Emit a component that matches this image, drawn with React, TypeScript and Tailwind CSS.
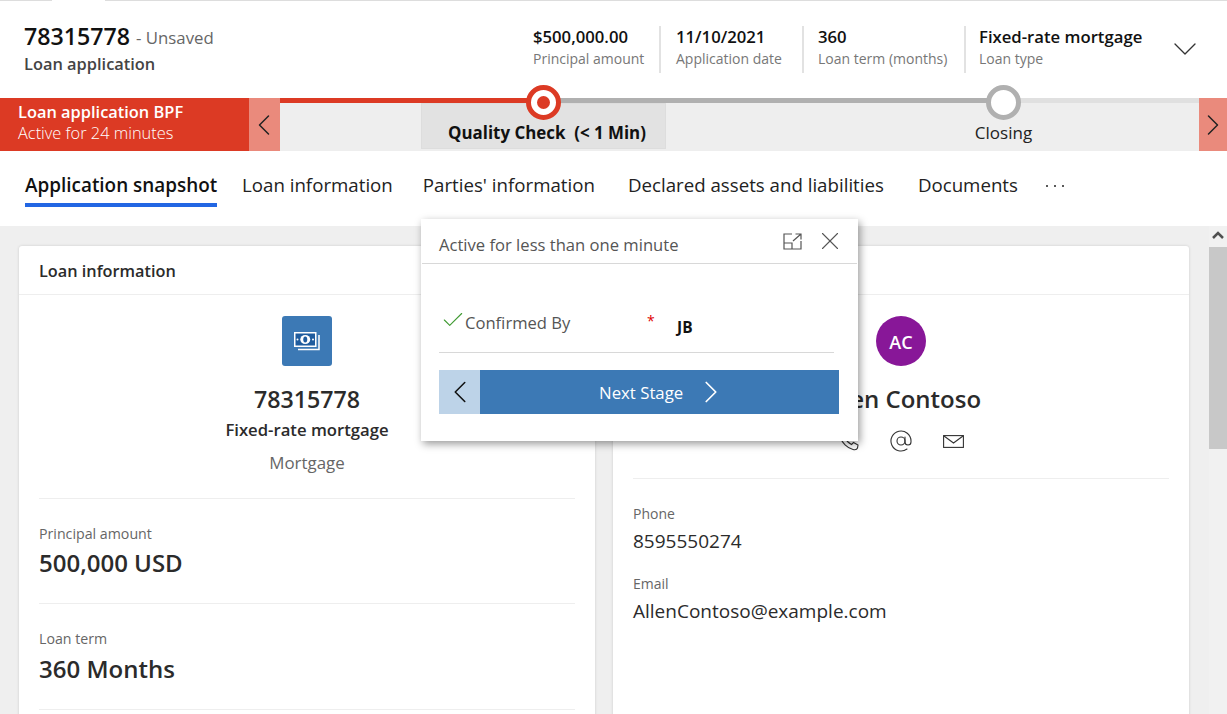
import { ChevronDown, ChevronLeft, ChevronRight, X, Check, AtSign } from 'lucide-react';

const fields = [
  { value: '$500,000.00', label: 'Principal amount', cls: 'w-[126px]' },
  { value: '11/10/2021', label: 'Application date', cls: 'w-[143px] border-l-2 border-[#e2e2e2] pl-[15px]' },
  { value: '360', label: 'Loan term (months)', cls: 'w-[162px] border-l-2 border-[#e2e2e2] pl-[14px]' },
  { value: 'Fixed-rate mortgage', label: 'Loan type', cls: 'w-[198px] border-l-2 border-[#e2e2e2] pl-[13px]' },
];

const tabs = [
  { name: 'Loan information', cls: 'ml-[25px]' },
  { name: "Parties' information", cls: 'ml-[30px]' },
  { name: 'Declared assets and liabilities', cls: 'ml-[33px]' },
  { name: 'Documents', cls: 'ml-[34px]' },
];

const MoneyIcon = () => (
  <svg width="26" height="19" viewBox="0 0 26 19" fill="none">
    <path d="M4 17.5H25V3" stroke="white" strokeWidth="1.5" />
    <rect x="0.75" y="0.75" width="21" height="13.5" fill="#1f5c9e" stroke="white" strokeWidth="1.5" />
    <ellipse cx="11.25" cy="7.5" rx="5" ry="4.5" fill="white" />
    <ellipse cx="11.25" cy="7.5" rx="2" ry="3" fill="#1f5c9e" />
    <circle cx="3.5" cy="7.5" r="1" fill="white" />
    <circle cx="19" cy="7.5" r="1" fill="white" />
  </svg>
);

const ExpandIcon = () => (
  <svg width="19" height="17" viewBox="0 0 19 17" fill="none" stroke="#555" strokeWidth="1.2">
    <path d="M9 1H1V16H18V8" />
    <path d="M1 10H9V16" />
    <path d="M10 8L18 1M12.5 1H18V6.5" />
  </svg>
);

const MailIcon = () => (
  <svg width="21" height="13" viewBox="0 0 21 13" fill="none" stroke="#333" strokeWidth="1.1">
    <rect x="0.6" y="0.6" width="19.8" height="11.8" />
    <path d="M1 1L10.5 8L20 1" />
  </svg>
);

const PhoneIcon = () => (
  <svg width="20" height="20" viewBox="0 0 20 20" fill="none" stroke="#333" strokeWidth="1.1">
    <path d="M3 1.5L6.5 1L8.5 5.5L6.5 7.5C7.5 10 9.5 12 12.5 13.5L14.5 11.5L19 14L18.5 17C18 18.5 16 19 14 18.5C8 17 3 12 1.5 6C1.2 4 1.5 2.5 3 1.5Z" />
  </svg>
);

const Stat = ({ label, value, cls }: { label: string; value: string; cls: string }) => (
  <div className="h-[105px] border-t border-[#eeeeee] pt-[25px]">
    <div className="text-[14.2px] leading-5 text-[#666666]">{label}</div>
    <div className={`${cls} text-[24px] leading-8 font-semibold text-[#2b2b2b]`}>{value}</div>
  </div>
);

const Contact = ({ label, value, cls }: { label: string; value: string; cls: string }) => (
  <div className={cls}>
    <div className="text-[14px] leading-5 text-[#666666]">{label}</div>
    <div className="mt-[5px] text-[19px] leading-6 text-[#2b2b2b]">{value}</div>
  </div>
);

const App = () => {
  return (
    <div className="relative h-[714px] w-[1227px] overflow-hidden bg-white font-['Open_Sans',sans-serif]">
      {/* top strip */}
      <div className="flex h-[1px]">
        <div className="w-[52px] bg-[#dddddd]"></div>
        <div className="w-[53px]"></div>
        <div className="flex-1 bg-[#dddddd]"></div>
      </div>

      {/* header */}
      <div className="flex h-[97px] items-start">
        <div className="w-[533px] pt-[19px] pl-[24px]">
          <div className="flex items-baseline">
            <span className="text-[23.2px] leading-8 font-semibold text-[#111111]">78315778</span>
            <span className="ml-[6px] -translate-y-px text-[16.8px] text-[#666666]">- Unsaved</span>
          </div>
          <div className="text-[16.4px] leading-6 font-semibold text-[#444444]">Loan application</div>
        </div>
        <div className="mt-[25px] flex">
          {fields.map((f) => (
            <div key={f.label} className={`h-[47px] ${f.cls}`}>
              <div className="text-[16.7px] leading-[22px] font-semibold whitespace-nowrap text-[#111111]">{f.value}</div>
              <div className="text-[14px] leading-[22px] whitespace-nowrap text-[#777777]">{f.label}</div>
            </div>
          ))}
        </div>
        <ChevronDown className="mt-[28px] ml-[3px] shrink-0 text-[#333333]" size={40} strokeWidth={0.8} />
      </div>

      {/* process bar */}
      <div className="flex h-[53px]">
        <div className="w-[249px] bg-[#dc3a24] pt-[3px] pl-[18px] whitespace-nowrap text-white">
          <div className="text-[16.4px] leading-[22px] font-semibold">Loan application BPF</div>
          <div className="text-[16.4px] leading-[19px] font-light">Active for 24 minutes</div>
        </div>
        <div className="flex w-[31px] items-center justify-center bg-[#ea8a7c] pr-[1px]">
          <ChevronLeft size={36} strokeWidth={1} className="shrink-0 text-[#222222]" />
        </div>
        <div className="relative flex-1 bg-[#eeeeee]">
          <div className="flex h-[5px]">
            <div className="w-[250px] bg-[#dc3a24]"></div>
            <div className="w-[470px] bg-[#b0b0b0]"></div>
            <div className="flex-1 bg-[#e0e0e0]"></div>
          </div>
          <div className="flex">
            <div className="ml-[141px] flex h-[46px] w-[245px] items-end justify-center border border-[#dddddd] bg-[#e2e2e2] pb-[3px] pl-[7px] text-[16.9px] leading-6 font-bold whitespace-nowrap text-[#111111]">
              Quality Check&nbsp; (&lt; 1 Min)
            </div>
            <div className="ml-[229px] w-[217px] pt-[18px] text-center text-[17px] leading-6 text-[#222222]">Closing</div>
          </div>
          <div className="absolute top-[-13px] left-[246px] flex h-[35px] w-[35px] items-center justify-center rounded-full border-[5px] border-[#dc3a24] bg-white">
            <div className="h-[13px] w-[13px] rounded-full bg-[#dc3a24]"></div>
          </div>
          <div className="absolute top-[-13px] left-[706px] h-[35px] w-[35px] rounded-full border-[5px] border-[#b0b0b0] bg-white"></div>
        </div>
        <div className="flex w-[28px] items-center justify-center bg-[#ea8a7c]">
          <ChevronRight size={36} strokeWidth={1} className="shrink-0 text-[#222222]" />
        </div>
      </div>

      {/* tabs */}
      <div className="flex h-[75px] items-start pt-[19px] text-[18.7px] leading-[30px] whitespace-nowrap text-[#222222]">
        <div className="ml-[25px] w-[192px] border-b-4 border-[#2266e3] pb-[3px] text-[18.9px] font-semibold text-[#111111]">Application snapshot</div>
        {tabs.map((t) => (
          <div key={t.name} className={t.cls}>{t.name}</div>
        ))}
        <div className="mt-[15px] ml-[28px] flex gap-[6px]">
          <div className="h-[2px] w-[2px] rounded-full bg-[#222222]"></div>
          <div className="h-[2px] w-[2px] rounded-full bg-[#222222]"></div>
          <div className="h-[2px] w-[2px] rounded-full bg-[#222222]"></div>
        </div>
      </div>

      {/* body */}
      <div className="flex h-[488px] bg-[#efefef]">
        <div className="flex flex-1 gap-[18px] pt-[20px] pl-[19px]">
          <div className="h-[480px] w-[576px] rounded-t-[3px] bg-white shadow-[0_0_3px_rgba(0,0,0,0.15)]">
            <div className="h-[49px] border-b border-[#eeeeee] pt-[13px] pl-[20px] text-[16.3px] leading-6 font-semibold text-[#2b2b2b]">Loan information</div>
            <div className="flex h-[203px] flex-col items-center pt-[21px]">
              <div className="flex h-[50px] w-[50px] items-center justify-center rounded-[3px] bg-[#3c79b5]">
                <MoneyIcon />
              </div>
              <div className="mt-[17px] text-[23.2px] leading-8 font-semibold text-[#2b2b2b]">78315778</div>
              <div className="mt-[3px] text-[16.7px] leading-6 font-semibold text-[#2b2b2b]">Fixed-rate mortgage</div>
              <div className="mt-[9px] text-[16.9px] leading-6 text-[#666666]">Mortgage</div>
            </div>
            <div className="px-[20px]">
              <Stat label="Principal amount" value="500,000 USD" cls="mt-[3px]" />
              <Stat label="Loan term" value="360 Months" cls="mt-[4px]" />
              <div className="mt-[1px] border-t border-[#eeeeee]"></div>
            </div>
          </div>
          <div className="h-[480px] w-[576px] rounded-t-[3px] bg-white shadow-[0_0_3px_rgba(0,0,0,0.15)]">
            <div className="h-[49px] border-b border-[#eeeeee]"></div>
            <div className="flex h-[183px] flex-col items-center pt-[21px]">
              <div className="flex h-[50px] w-[50px] items-center justify-center rounded-full bg-[#881798] pt-[2px] text-[18px] font-semibold text-white">AC</div>
              <div className="mt-[17px] text-[24px] leading-8 font-semibold text-[#2b2b2b]">Allen Contoso</div>
              <div className="mt-[14px] flex items-center gap-[30px] text-[#333333]">
                <PhoneIcon />
                <AtSign size={24} strokeWidth={1.1} />
                <MailIcon />
              </div>
            </div>
            <div className="mx-[20px] border-t border-[#eeeeee]">
              <Contact cls="pt-[25px]" label="Phone" value="8595550274" />
              <Contact cls="pt-[21px]" label="Email" value="AllenContoso@example.com" />
            </div>
          </div>
        </div>
        {/* scrollbar */}
        <div className="w-[18px] bg-[#f1f1f1]">
          <svg className="mt-[5px] ml-[3px]" width="12" height="9" viewBox="0 0 12 9" fill="none" stroke="#505050" strokeWidth="2.5">
            <path d="M1 7L6 2L11 7" />
          </svg>
          <div className="mt-[7px] h-[202px] bg-[#c8c8c8]"></div>
        </div>
      </div>

      {/* stage flyout */}
      <div className="absolute top-[219px] left-[421px] h-[222px] w-[437px] bg-white shadow-[2px_3px_8px_rgba(0,0,0,0.4)]">
        <div className="mx-[1px] flex h-[45px] items-start border-b border-[#d8d8d8]">
          <div className="mt-[14px] ml-[17px] w-[344px] text-[16.6px] leading-6 whitespace-nowrap text-[#555555]">Active for less than one minute</div>
          <div className="mt-[14px]"><ExpandIcon /></div>
          <X className="mt-[7px] ml-[13px] shrink-0 text-[#555555]" size={30} strokeWidth={0.9} />
        </div>
        <div className="mr-[24px] ml-[18px] flex h-[89px] items-start border-b border-[#d8d8d8] pt-[48px]">
          <Check className="mt-[-5px] ml-[1px] shrink-0 text-[#3f9a32]" size={26} strokeWidth={1} />
          <div className="mt-[-1px] ml-[-1px] w-[182px] shrink-0 text-[16.6px] leading-6 text-[#555555]">Confirmed By</div>
          <div className="mt-[-3px] w-[30px] shrink-0 text-[14px] leading-6 text-[#e00000]">*</div>
          <div className="mt-[5px] text-[15.5px] leading-5 font-bold text-[#111111]">JB</div>
        </div>
        <div className="mt-[17px] ml-[18px] flex h-[44px] w-[400px]">
          <div className="flex w-[41px] items-center justify-center bg-[#bdd3e8]">
            <ChevronLeft size={38} strokeWidth={1} className="shrink-0 text-[#111111]" />
          </div>
          <div className="flex flex-1 items-center bg-[#3c79b5] pl-[119px] text-[16.8px] text-white">
            <span className="pt-[2px]">Next Stage</span>
            <ChevronRight className="ml-[9px] shrink-0" size={38} strokeWidth={1.1} />
          </div>
        </div>
      </div>
    </div>
  );
};

export default App;
